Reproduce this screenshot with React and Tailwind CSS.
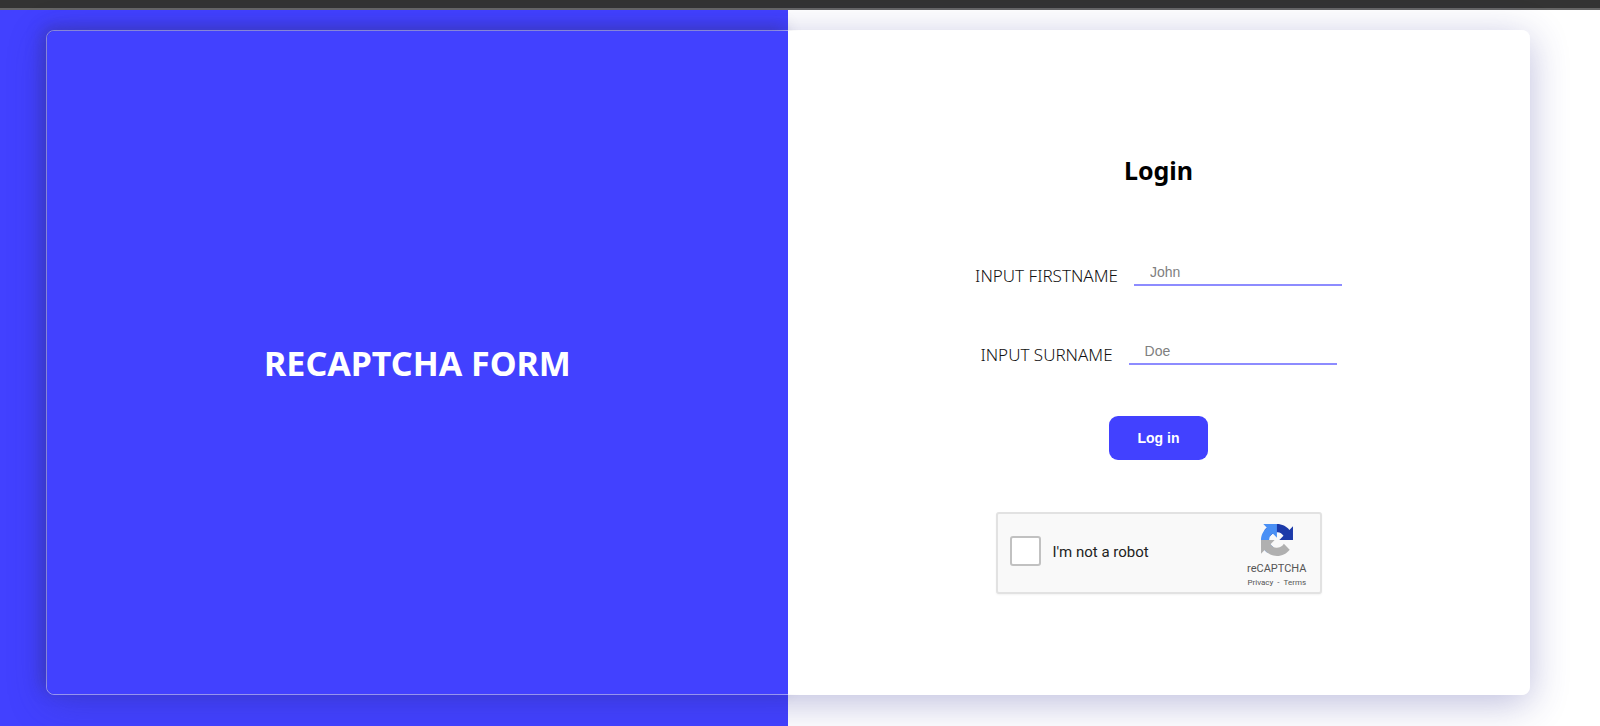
import React from 'react';

const fields = [
    { id: 'firstname', label: 'INPUT FIRSTNAME', placeholder: 'John' },
    { id: 'surname', label: 'INPUT SURNAME', placeholder: 'Doe' },
];

const RecaptchaLogo = () => (
    <svg viewBox="0 0 64 64" className="w-8 h-[34px]" aria-hidden="true">
        <path
            fill="#1c3aa9"
            d="M64 31.955l-.033-1.37V4.687l-7.16 7.16C50.948 4.674 42.033.093 32.05.093c-10.4 0-19.622 4.96-25.458 12.64l11.736 11.86a15.55 15.55 0 0 1 4.754-5.334c2.05-1.6 4.952-2.906 8.968-2.906.485 0 .86.057 1.135.163 4.976.393 9.288 3.14 11.828 7.124l-8.307 8.307L64 31.953"
        />
        <path
            fill="#4a90f5"
            d="M31.862.094l-1.37.033H4.594l7.16 7.16C4.58 13.147 0 22.06 0 32.046c0 10.4 4.96 19.622 12.64 25.458L24.5 45.768a15.55 15.55 0 0 1-5.334-4.754c-1.6-2.05-2.906-4.952-2.906-8.968 0-.485.057-.86.163-1.135.393-4.976 3.14-9.288 7.124-11.828l8.307 8.307L31.86.095"
        />
        <path
            fill="#b0b0b0"
            d="M.001 32.045l.033 1.37v25.898l7.16-7.16c5.86 7.173 14.774 11.754 24.76 11.754 10.4 0 19.622-4.96 25.458-12.64l-11.736-11.86a15.55 15.55 0 0 1-4.754 5.334c-2.05 1.6-4.952 2.906-8.968 2.906-.485 0-.86-.057-1.135-.163-4.976-.393-9.288-3.14-11.828-7.124l8.307-8.307c-10.522.04-22.4.066-27.295-.005"
        />
    </svg>
);

const Recaptcha = () => (
    <div className="flex items-center w-[326px] h-[82px] pl-3 pr-[13px] bg-[#f9f9f9] border-2 border-[#e2e2e2] rounded-[3px] shadow-xs font-['Roboto',sans-serif]">
        <input
            id="robot"
            type="checkbox"
            className="appearance-none w-[31px] h-[30px] mb-1 bg-white border-2 border-[#c1c1c1] rounded-[3px]"
        />
        <label htmlFor="robot" className="ml-3 mb-0.5 text-[15px] leading-5 text-[#222]">
            I'm not a robot
        </label>
        <div className="ml-auto pt-1.5 flex flex-col items-center">
            <RecaptchaLogo />
            <span className="mt-1 text-[11px] leading-4 text-[#555]">reCAPTCHA</span>
            <div className="flex gap-1 text-[8px] leading-3 text-[#555]">
                <a href="#privacy">Privacy</a>
                <span>-</span>
                <a href="#terms">Terms</a>
            </div>
        </div>
    </div>
);

const App = () => {
    return (
        <div className="min-h-screen flex flex-col bg-white font-['Noto_Sans',sans-serif]">
            <div className="h-[10px] bg-[#333] border-b-2 border-[#666]" />

            {/* Split background, the scrollbar gutter stays white */}
            <div className="flex-1 flex pr-6">
                <main className="flex-1 flex px-[46px] pt-5 pb-[31px] bg-linear-to-r from-[#4241ff] from-50% to-transparent to-50%">
                    <div className="flex-1 grid grid-cols-2 border border-white/50 rounded-lg shadow-[0_8px_38px_rgba(50,50,150,0.32)]">
                        <section className="flex items-center justify-center rounded-l-lg bg-[#4241ff] shadow-[-4px_-4px_16px_rgba(50,45,90,0.35)]">
                            <h1 className="text-[34px] leading-10 font-bold text-white">RECAPTCHA FORM</h1>
                        </section>

                        <section className="flex flex-col items-center justify-center pt-[22px] rounded-r-lg bg-white">
                            <h2 className="text-[25px] leading-[34px] font-bold text-black">Login</h2>

                            <form className="flex flex-col items-center mt-[70px]">
                                <div className="flex flex-col items-center gap-[50px]">
                                    {fields.map((field) => (
                                        <div key={field.id} className="flex items-end gap-4">
                                            <label htmlFor={field.id} className="text-[17px] leading-5 font-light text-[#111]">
                                                {field.label}
                                            </label>
                                            <input
                                                id={field.id}
                                                type="text"
                                                placeholder={field.placeholder}
                                                className="w-[208px] h-[29px] px-4 pt-0.5 border-b-2 border-[#8d8cff] font-['Liberation_Sans',sans-serif] text-[14px] placeholder-[#808080] outline-none"
                                            />
                                        </div>
                                    ))}
                                </div>

                                <button
                                    type="submit"
                                    className="w-[99px] h-11 mt-[51px] mb-[52px] rounded-[9px] bg-[#4241ff] font-['Liberation_Sans',sans-serif] text-[14px] font-bold text-white"
                                >
                                    Log in
                                </button>

                                <Recaptcha />
                            </form>
                        </section>
                    </div>
                </main>
            </div>
        </div>
    );
};

export default App;
